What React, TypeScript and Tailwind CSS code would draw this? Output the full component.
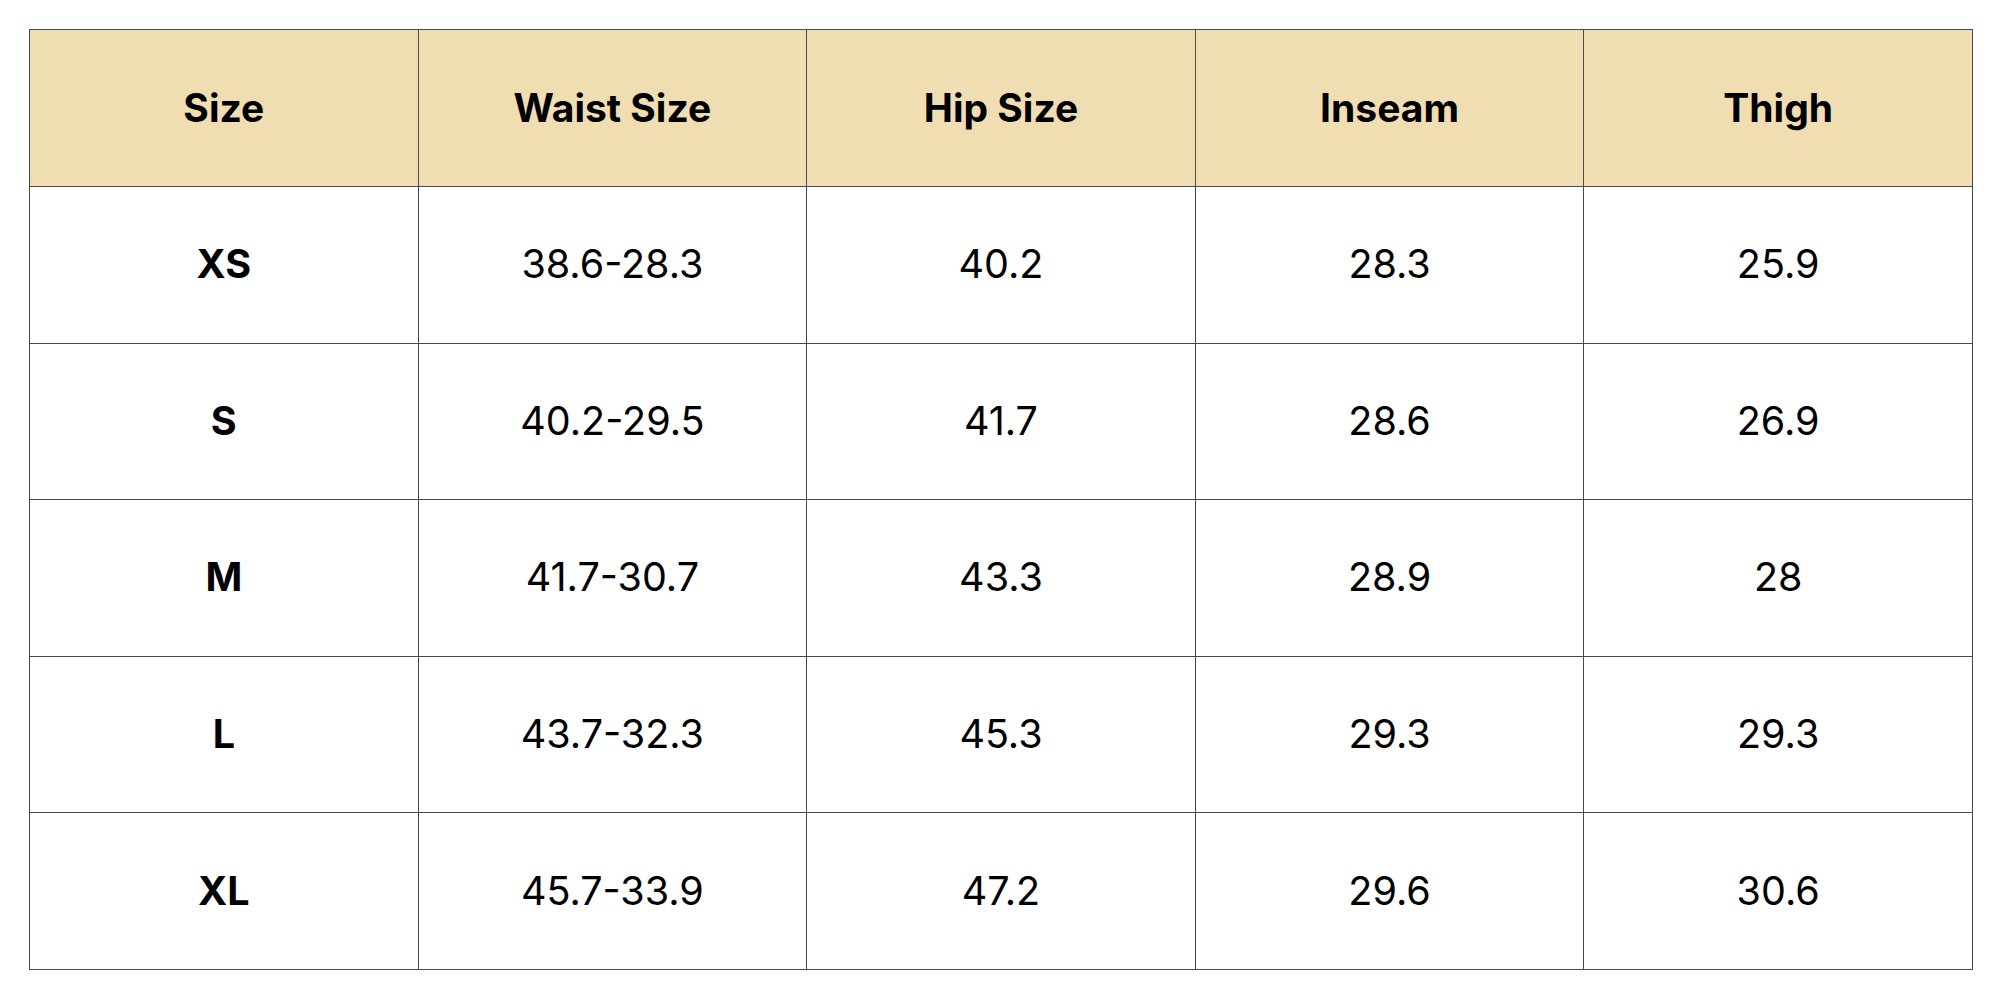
import React from "react";

const headers = ["Size", "Waist Size", "Hip Size", "Inseam", "Thigh"];
const rows = [
  ["XS", "38.6-28.3", "40.2", "28.3", "25.9"],
  ["S", "40.2-29.5", "41.7", "28.6", "26.9"],
  ["M", "41.7-30.7", "43.3", "28.9", "28"],
  ["L", "43.7-32.3", "45.3", "29.3", "29.3"],
  ["XL", "45.7-33.9", "47.2", "29.6", "30.6"],
];

export default function App() {
  return (
    <div className="w-[2000px] h-[1000px] bg-white pt-[29px] pl-[29px] pr-[27px]" style={{ fontFamily: "Inter, 'Open Sans', sans-serif" }}>
      <table className="w-full border-collapse table-fixed text-black">
        <thead>
          <tr className="bg-[#f0ddb1] h-[157px]">
            {headers.map((h) => (
              <th key={h} className="border border-[#4a4a4a] text-[39px] font-bold text-center align-middle">
                {h}
              </th>
            ))}
          </tr>
        </thead>
        <tbody>
          {rows.map((r) => (
            <tr key={r[0]} className="h-[156.6px]">
              {r.map((c, i) => (
                <td
                  key={i}
                  className={`border border-[#4a4a4a] text-center align-middle text-[39.5px] ${i === 0 ? "font-bold" : "font-normal"}`}
                >
                  {c}
                </td>
              ))}
            </tr>
          ))}
        </tbody>
      </table>
    </div>
  );
}
